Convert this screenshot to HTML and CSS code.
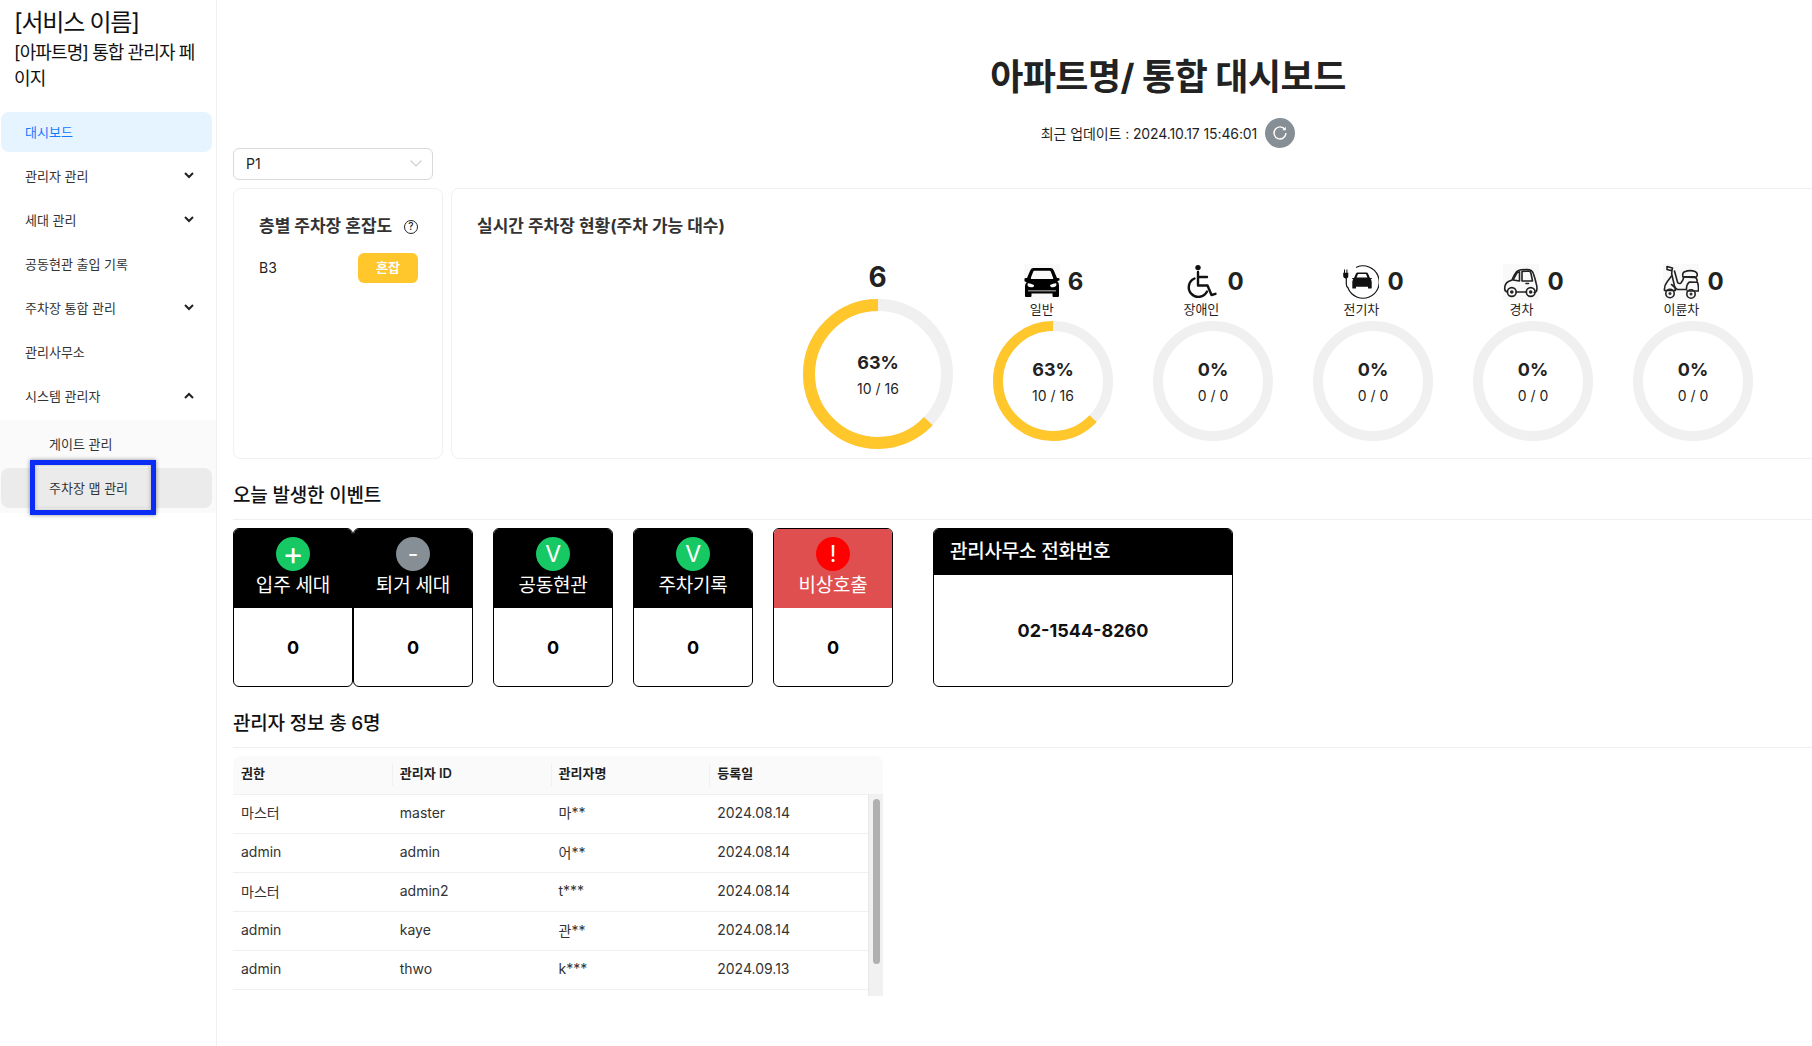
FILE: index.html
```html
<!DOCTYPE html>
<html lang="ko">
<head>
    <meta charset="UTF-8">
    <meta name="viewport" content="width=device-width, initial-scale=1.0">
    <title>통합 대시보드</title>
    <link rel="stylesheet" href="styles.css">
</head>
<body>
    <aside class="sidebar">
        <div class="brand">
            <div class="brand-name">[서비스 이름]</div>
            <div class="brand-sub">[아파트명] 통합 관리자 페이지</div>
        </div>
        <nav class="menu">
            <a class="menu-item active">대시보드</a>
            <a class="menu-item">관리자 관리
                <svg class="chevron" viewBox="0 0 12 12"><path d="M2 4l4 4 4-4"/></svg>
            </a>
            <a class="menu-item">세대 관리
                <svg class="chevron" viewBox="0 0 12 12"><path d="M2 4l4 4 4-4"/></svg>
            </a>
            <a class="menu-item">공동현관 출입 기록</a>
            <a class="menu-item">주차장 통합 관리
                <svg class="chevron" viewBox="0 0 12 12"><path d="M2 4l4 4 4-4"/></svg>
            </a>
            <a class="menu-item">관리사무소</a>
            <a class="menu-item">시스템 관리자
                <svg class="chevron" viewBox="0 0 12 12"><path d="M2 9l4-4 4 4"/></svg>
            </a>
            <div class="submenu">
                <a class="menu-item sub-item">게이트 관리</a>
                <a class="menu-item sub-item current">주차장 맵 관리
                    <span class="highlight-box"></span>
                </a>
            </div>
        </nav>
    </aside>

    <main class="main">
        <header class="page-header">
            <h1>아파트명/ 통합 대시보드</h1>
            <div class="update-row">
                <span>최근 업데이트 : 2024.10.17 15:46:01</span>
                <button class="refresh-btn" type="button">
                    <svg viewBox="0 0 16 16" width="16" height="16"><path d="M13 4.6A6 6 0 1 0 14 8"/><path class="arrow-head" d="M13.8 1.8v3.4h-3.4z"/></svg>
                </button>
            </div>
        </header>

        <div class="select-box">
            <span>P1</span>
            <svg viewBox="0 0 12 12" width="12" height="12"><path d="M.5 3.500L6 9l5.500-5.500"/></svg>
        </div>

        <div class="status-row">
            <section class="card floor-card">
                <h2 class="card-title">층별 주차장 혼잡도 <span class="help-icon">?</span></h2>
                <div class="floor-row">
                    <span class="floor-name">B3</span>
                    <span class="badge">혼잡</span>
                </div>
            </section>

            <section class="card live-card">
                <h2 class="card-title">실시간 주차장 현황(주차 가능 대수)</h2>
                <div class="ring-row">
                    <div class="ring-item">
                        <div class="total-count">6</div>
                        <div class="ring ring-large">
                            <svg viewBox="0 0 150 150"><circle class="track" cx="75" cy="75" r="69" stroke-width="12"/><circle class="value" cx="75" cy="75" r="69" stroke-width="12" pathLength="100" stroke-dasharray="63 100"/></svg>
                            <div class="ring-text"><strong>63%</strong><span>10 / 16</span></div>
                        </div>
                    </div>

                    <div class="ring-item">
                        <div class="ring-head">
                            <div class="kind">
                                <svg class="kind-icon tinted" viewBox="0 0 36 36"><path fill-rule="evenodd" d="M9.500 4h17q2.300 0 3.200 2.200L33 14h1.500q1 0 1 1v1.200l-2.200 1.100q1.700 1.600 1.700 4V32q0 1-1 1h-4.500q-1 0-1-1v-2.500H7.500V32q0 1-1 1H2q-1 0-1-1v-9.700q0-2.400 1.700-4L.5 17.200V15q0-1 1-1H3l3.300-7.800Q7.200 4 9.500 4zM9.300 7.400L6.800 14q-.3.900.7.900h21q1 0 .7-.9l-2.500-6.600q-.3-.7-1.100-.7H10.400q-.8 0-1.100.7zM3.500 20.500q0 2.800 3.500 2.800t3-2.300q-3.500-1.700-5.400-1.700-1.100 0-1.100 1.200zM32.500 20.500q0-1.200-1.100-1.200-1.900 0-5.400 1.700 0 2.300 3 2.300t3.500-2.800zM4 26.500v.8h28v-.8z"/></svg>
                                <span class="kind-label">일반</span>
                            </div>
                            <span class="kind-count">6</span>
                        </div>
                        <div class="ring ring-small">
                            <svg viewBox="0 0 120 120"><circle class="track" cx="60" cy="60" r="55" stroke-width="10"/><circle class="value" cx="60" cy="60" r="55" stroke-width="10" pathLength="100" stroke-dasharray="63 100"/></svg>
                            <div class="ring-text"><strong>63%</strong><span>10 / 16</span></div>
                        </div>
                    </div>

                    <div class="ring-item">
                        <div class="ring-head">
                            <div class="kind">
                                <svg class="kind-icon" viewBox="0 0 36 36"><circle cx="15" cy="3.600" r="2.700" fill="#111"/><path class="line-thick" d="M15 8v13.500h9.500l4 9.500 4-1.200M15 13h9M11.500 14.500a9.600 9.600 0 1 0 12.500 13"/></svg>
                                <span class="kind-label">장애인</span>
                            </div>
                            <span class="kind-count">0</span>
                        </div>
                        <div class="ring ring-small">
                            <svg viewBox="0 0 120 120"><circle class="track" cx="60" cy="60" r="55" stroke-width="10"/></svg>
                            <div class="ring-text"><strong>0%</strong><span>0 / 0</span></div>
                        </div>
                    </div>

                    <div class="ring-item">
                        <div class="ring-head">
                            <div class="kind">
                                <svg class="kind-icon" viewBox="0 0 36 36"><path class="line-thin" d="M13.500 3.200A16.200 16.200 0 1 1 5 24M3.300 14v6q0 3 2 4"/><path fill="#111" d="M1 5.500h1v3.300h1.400V5.500h1v3.300h.9v3.500q0 2-1.800 2.300h-.9Q.2 14.300.2 12.300V8.800H1zM11 14l2-4.500q.5-1 1.600-1h8.800q1.100 0 1.600 1l2 4.500h1.200q.8 0 .8.800l-1.300.8q1 1 1 2.400v6q0 .6-.6.600h-2.500q-.6 0-.6-.6v-1.300H13v1.300q0 .6-.6.600H9.900q-.6 0-.6-.6v-6q0-1.400 1-2.400L9 14.800q0-.8.800-.8zm2.600-.6h10.800l-1.400-3.300h-8z"/></svg>
                                <span class="kind-label">전기차</span>
                            </div>
                            <span class="kind-count">0</span>
                        </div>
                        <div class="ring ring-small">
                            <svg viewBox="0 0 120 120"><circle class="track" cx="60" cy="60" r="55" stroke-width="10"/></svg>
                            <div class="ring-text"><strong>0%</strong><span>0 / 0</span></div>
                        </div>
                    </div>

                    <div class="ring-item">
                        <div class="ring-head">
                            <div class="kind">
                                <svg class="kind-icon tinted" viewBox="0 0 36 36"><path class="line-mid" d="M4.500 28q-2.800-.5-2.800-3.500 0-5 3.800-7l3.500-1.500q3-7.500 6-9.300 2.500-1.200 9-1.200 5.500 0 6.500 4.500 1.800 5 2.800 10 .8 2 .6 5 0 3-2.700 3.500M13 28h10.500"/><path class="line-mid" d="M10 16l3.500-6.500q1-1.500 3-1.800v9.300zM19 7.400l6.500-.4q2 0 2.500 2.500l1.500 7.500H19zM23 19.500h2.500"/><circle class="line-mid" cx="8.800" cy="28" r="4.400"/><circle class="line-mid" cx="27.700" cy="28" r="4.400"/><circle cx="8.800" cy="28" r="1.800" fill="#222"/><circle cx="27.700" cy="28" r="1.800" fill="#222"/></svg>
                                <span class="kind-label">경차</span>
                            </div>
                            <span class="kind-count">0</span>
                        </div>
                        <div class="ring ring-small">
                            <svg viewBox="0 0 120 120"><circle class="track" cx="60" cy="60" r="55" stroke-width="10"/></svg>
                            <div class="ring-text"><strong>0%</strong><span>0 / 0</span></div>
                        </div>
                    </div>

                    <div class="ring-item">
                        <div class="ring-head">
                            <div class="kind">
                                <svg class="kind-icon tinted" viewBox="0 0 36 36"><path class="line-mid" d="M4 2.500l5.500 1.500-.7 2.700L4 5.500zM9 6l-.3 4 2.800 12q1 2.500 3 3.500h9q-.3-5 3-7.500l7.500.2q.8-3.500-2.500-5.500H21q-1 4-3.300 6.500-1.500.8-3-.5L11.500 7"/><path class="line-mid" d="M20 13q-1-3.500 1-5 6-2.500 11-.5 3 1.500 2 4.500-.5 1.700-3 1.500zM8.500 12L4 18q-3 4-2.500 8.500h11q-.5-4-4-6M34.500 18.500q1.500 4 .8 8.500H24"/><circle class="line-mid" cx="7" cy="29.500" r="4.200"/><circle class="line-mid" cx="28" cy="30" r="4.200"/><circle cx="7" cy="29.500" r="1.500" fill="#333"/><circle cx="28" cy="30" r="1.500" fill="#333"/></svg>
                                <span class="kind-label">이륜차</span>
                            </div>
                            <span class="kind-count">0</span>
                        </div>
                        <div class="ring ring-small">
                            <svg viewBox="0 0 120 120"><circle class="track" cx="60" cy="60" r="55" stroke-width="10"/></svg>
                            <div class="ring-text"><strong>0%</strong><span>0 / 0</span></div>
                        </div>
                    </div>
                </div>
            </section>
        </div>

        <h2 class="section-title">오늘 발생한 이벤트</h2>
        <div class="event-row">
            <div class="event-pair">
                <div class="event-card">
                    <div class="event-head"><span class="dot green plus">+</span>입주 세대</div>
                    <div class="event-value">0</div>
                </div>
                <div class="event-card">
                    <div class="event-head"><span class="dot gray">-</span>퇴거 세대</div>
                    <div class="event-value">0</div>
                </div>
            </div>
            <div class="event-card">
                <div class="event-head"><span class="dot green">V</span>공동현관</div>
                <div class="event-value">0</div>
            </div>
            <div class="event-card">
                <div class="event-head"><span class="dot green">V</span>주차기록</div>
                <div class="event-value">0</div>
            </div>
            <div class="event-card">
                <div class="event-head alert"><span class="dot red">!</span>비상호출</div>
                <div class="event-value">0</div>
            </div>
            <div class="event-card office-card">
                <div class="office-head">관리사무소 전화번호</div>
                <div class="office-value">02-1544-8260</div>
            </div>
        </div>

        <h2 class="section-title">관리자 정보 총 6명</h2>
        <div class="admin-table">
            <table class="table-head">
                <tr><th>권한</th><th>관리자 ID</th><th>관리자명</th><th>등록일</th><th class="scroll-gap"></th></tr>
            </table>
            <div class="table-scroll">
                <table class="table-body">
                    <tr><td>마스터</td><td>master</td><td>마**</td><td>2024.08.14</td></tr>
                    <tr><td>admin</td><td>admin</td><td>어**</td><td>2024.08.14</td></tr>
                    <tr><td>마스터</td><td>admin2</td><td>t***</td><td>2024.08.14</td></tr>
                    <tr><td>admin</td><td>kaye</td><td>관**</td><td>2024.08.14</td></tr>
                    <tr><td>admin</td><td>thwo</td><td>k***</td><td>2024.09.13</td></tr>
                </table>
                <div class="scroll-track"><div class="scroll-thumb"></div></div>
            </div>
        </div>
    </main>
</body>
</html>
```

FILE: styles.css
```css
* {
    box-sizing: border-box;
}

html, body {
    height: 100%;
}

body {
    margin: 0;
    display: flex;
    overflow: hidden;
    font-family: Inter, "Noto Sans CJK KR", sans-serif;
    font-size: 14px;
    color: #1f1f1f;
    background: #fff;
}

/* sidebar */
.sidebar {
    flex: 0 0 217px;
    border-right: 1px solid #f0f0f0;
    padding-top: 8px;
}

.brand {
    padding: 0 14px;
    color: #111;
}

.brand-name {
    font-size: 24px;
    line-height: 30px;
    letter-spacing: -1.25px;
    margin-bottom: 2px;
}

.brand-sub {
    font-size: 18px;
    line-height: 26px;
    letter-spacing: -0.9px;
}

.menu {
    margin-top: 20px;
}

.menu-item {
    position: relative;
    display: flex;
    align-items: center;
    justify-content: space-between;
    height: 40px;
    margin: 0 4px 4px 1px;
    padding: 0 17px 2px 24px;
    border-radius: 8px;
    font-size: 13px;
    color: #333;
}

.menu-item.active {
    background: #e6f4ff;
    color: #1677ff;
}

.chevron {
    width: 12px;
    height: 12px;
    fill: none;
    stroke: #222;
    stroke-width: 2;
}

.submenu {
    background: #fafafa;
    padding: 4px 0 1px;
}

.sub-item {
    padding-left: 48px;
}

.sub-item.current {
    background: #ebebeb;
}

.highlight-box {
    position: absolute;
    left: 29px;
    top: -8px;
    width: 126px;
    height: 55px;
    border: 5px solid #0a2cf5;
    box-shadow: 0 0 4px rgba(0, 0, 0, 0.45), inset 0 0 4px rgba(0, 0, 0, 0.3);
}

/* main */
.main {
    flex: 0 0 1886px;
    padding: 55px 0 0 16px;
}

.page-header {
    text-align: center;
}

h1 {
    margin: 0 0 19px;
    font-size: 36px;
    line-height: 44px;
    font-weight: 700;
    letter-spacing: -0.5px;
    color: #222;
}

.update-row {
    display: flex;
    align-items: center;
    justify-content: center;
    gap: 8px;
    height: 30px;
    font-size: 14px;
    letter-spacing: -0.1px;
}

.refresh-btn {
    display: flex;
    align-items: center;
    justify-content: center;
    width: 30px;
    height: 30px;
    padding: 0;
    border: none;
    border-radius: 50%;
    background: #868e96;
}

.refresh-btn svg {
    fill: none;
    stroke: #fff;
    stroke-width: 1.4;
}

.refresh-btn .arrow-head {
    fill: #fff;
    stroke: none;
}

.select-box {
    display: flex;
    align-items: center;
    justify-content: space-between;
    width: 200px;
    height: 32px;
    margin-bottom: 8px;
    padding: 0 10px 2px 12px;
    border: 1px solid #d9d9d9;
    border-radius: 6px;
}

.select-box svg {
    fill: none;
    stroke: #cfcfcf;
    stroke-width: 1.1;
}

.status-row {
    display: flex;
    gap: 8px;
}

.card {
    border: 1px solid #f0f0f0;
    border-radius: 8px;
    padding: 25px 24px 9px 25px;
}

.card-title {
    display: flex;
    align-items: center;
    justify-content: space-between;
    margin: 0;
    font-size: 17px;
    line-height: 24px;
    font-weight: 700;
    color: #333;
}

.floor-card {
    flex: 0 0 210px;
}

.help-icon {
    width: 14px;
    height: 14px;
    margin-top: 2px;
    border: 1.2px solid #222;
    border-radius: 50%;
    font-size: 10px;
    font-weight: 500;
    line-height: 11px;
    text-align: center;
    color: #222;
}

.floor-row {
    display: flex;
    align-items: center;
    justify-content: space-between;
    margin-top: 15px;
}

.floor-name {
    padding-bottom: 2px;
}

.badge {
    width: 60px;
    height: 30px;
    border-radius: 6px;
    background: #ffc72c;
    color: #fff;
    font-size: 13px;
    font-weight: 600;
    line-height: 28px;
    text-align: center;
}

.live-card {
    flex: 1;
}

.live-card .card-title {
    justify-content: flex-start;
}

.ring-row {
    display: flex;
    align-items: center;
    justify-content: center;
    gap: 40px;
    margin-top: 18px;
}

.ring-item {
    display: flex;
    flex-direction: column;
    align-items: center;
}

.total-count {
    height: 43px;
    font-size: 28px;
    font-weight: 700;
    line-height: 43px;
    color: #222;
}

.ring-head {
    display: flex;
    align-items: flex-start;
    gap: 8px;
    height: 57px;
    padding-left: 2px;
}

.kind {
    display: flex;
    flex-direction: column;
    align-items: center;
    width: 36px;
}

.kind-icon {
    display: block;
    flex: none;
    width: 36px;
    height: 36px;
}

.kind-icon.tinted {
    background: #f9f9f9;
}

.kind-label {
    font-size: 13px;
    line-height: 18px;
    white-space: nowrap;
}

.kind-count {
    font-size: 24px;
    font-weight: 700;
    line-height: 36px;
    color: #222;
}

.line-thick, .line-thin, .line-mid {
    fill: none;
    stroke-linecap: round;
    stroke-linejoin: round;
}

.line-thick {
    stroke: #111;
    stroke-width: 2.4;
}

.line-thin {
    stroke: #111;
    stroke-width: 1.2;
}

.line-mid {
    stroke: #222;
    stroke-width: 1.6;
}

.ring {
    display: grid;
    place-items: center;
}

.ring > * {
    grid-area: 1 / 1;
}

.ring-large {
    width: 150px;
    height: 150px;
}

.ring-small {
    width: 120px;
    height: 120px;
}

.ring svg {
    display: block;
    width: 100%;
    height: 100%;
    fill: none;
    transform: rotate(-90deg) scaleY(-1);
}

.track {
    stroke: #f0f0f0;
}

.value {
    stroke: #ffc72c;
}

.ring-text {
    display: flex;
    flex-direction: column;
    align-items: center;
    padding: 3px 0 0 1px;
}

.ring-text strong {
    font-size: 18px;
    line-height: 26px;
    font-weight: 700;
    color: #222;
}

.ring-text span {
    font-size: 14px;
    line-height: 26px;
}

/* events */
.section-title {
    margin: 24px 0 8px;
    padding-bottom: 10px;
    border-bottom: 1px solid #f0f0f0;
    font-size: 19px;
    line-height: 26px;
    font-weight: 500;
    letter-spacing: -0.2px;
    color: #111;
}

.event-row {
    display: flex;
    gap: 20px;
}

.event-pair {
    display: flex;
}

.event-card {
    display: flex;
    flex-direction: column;
    width: 120px;
    height: 159px;
    border: 1px solid #000;
    border-radius: 6px;
    overflow: hidden;
}

.event-head {
    display: flex;
    flex-direction: column;
    align-items: center;
    height: 79px;
    padding-top: 8px;
    background: #000;
    color: #fff;
    font-size: 19px;
    line-height: 26px;
    letter-spacing: -0.2px;
}

.event-head.alert {
    background: #e04f4f;
}

.dot {
    width: 34px;
    height: 34px;
    margin-bottom: 2px;
    border-radius: 50%;
    font-size: 23px;
    font-weight: 400;
    line-height: 34px;
    text-align: center;
}

.dot.plus {
    font-size: 32px;
}

.green {
    background: #17c964;
}

.gray {
    background: #868e96;
}

.red {
    background: #ff0000;
}

.event-value {
    flex: 1;
    display: flex;
    align-items: center;
    justify-content: center;
    font-size: 18px;
    font-weight: 700;
    color: #000;
}

.office-card {
    width: 300px;
    margin-left: 20px;
}

.office-head {
    height: 46px;
    padding-left: 16px;
    background: #000;
    color: #fff;
    font-size: 19px;
    font-weight: 500;
    letter-spacing: -0.2px;
    line-height: 46px;
}

.office-value {
    flex: 1;
    display: flex;
    align-items: center;
    justify-content: center;
    font-size: 18px;
    font-weight: 700;
    color: #111;
}

/* admin table */
.admin-table {
    width: 650px;
}

.admin-table table {
    width: 100%;
    table-layout: fixed;
    border-collapse: collapse;
}

.table-head {
    border-radius: 8px 8px 0 0;
    overflow: hidden;
}

.table-head th {
    position: relative;
    height: 38px;
    padding: 0 8px 4px;
    background: #fafafa;
    border-bottom: 1px solid #f0f0f0;
    font-size: 13px;
    font-weight: 600;
    text-align: left;
}

.table-head th + th::before {
    content: "";
    position: absolute;
    left: 0;
    top: 8px;
    width: 1px;
    height: 22px;
    background: #f0f0f0;
}

.table-head .scroll-gap {
    width: 15px;
    padding: 0;
}

.table-head .scroll-gap::before {
    display: none;
}

.table-scroll {
    display: flex;
    align-items: flex-start;
    height: 201px;
}

.table-body td {
    height: 39px;
    padding: 0 8px 3px;
    border-bottom: 1px solid #f0f0f0;
    font-size: 14px;
    color: #333;
}

.scroll-track {
    flex: 0 0 15px;
    height: 100%;
    padding: 4px 3px 0 4px;
    background: #f1f1f1;
    border-left: 1px solid #e8e8e8;
}

.scroll-thumb {
    height: 165px;
    border-radius: 4px;
    background: #b0b0b0;
}
```
